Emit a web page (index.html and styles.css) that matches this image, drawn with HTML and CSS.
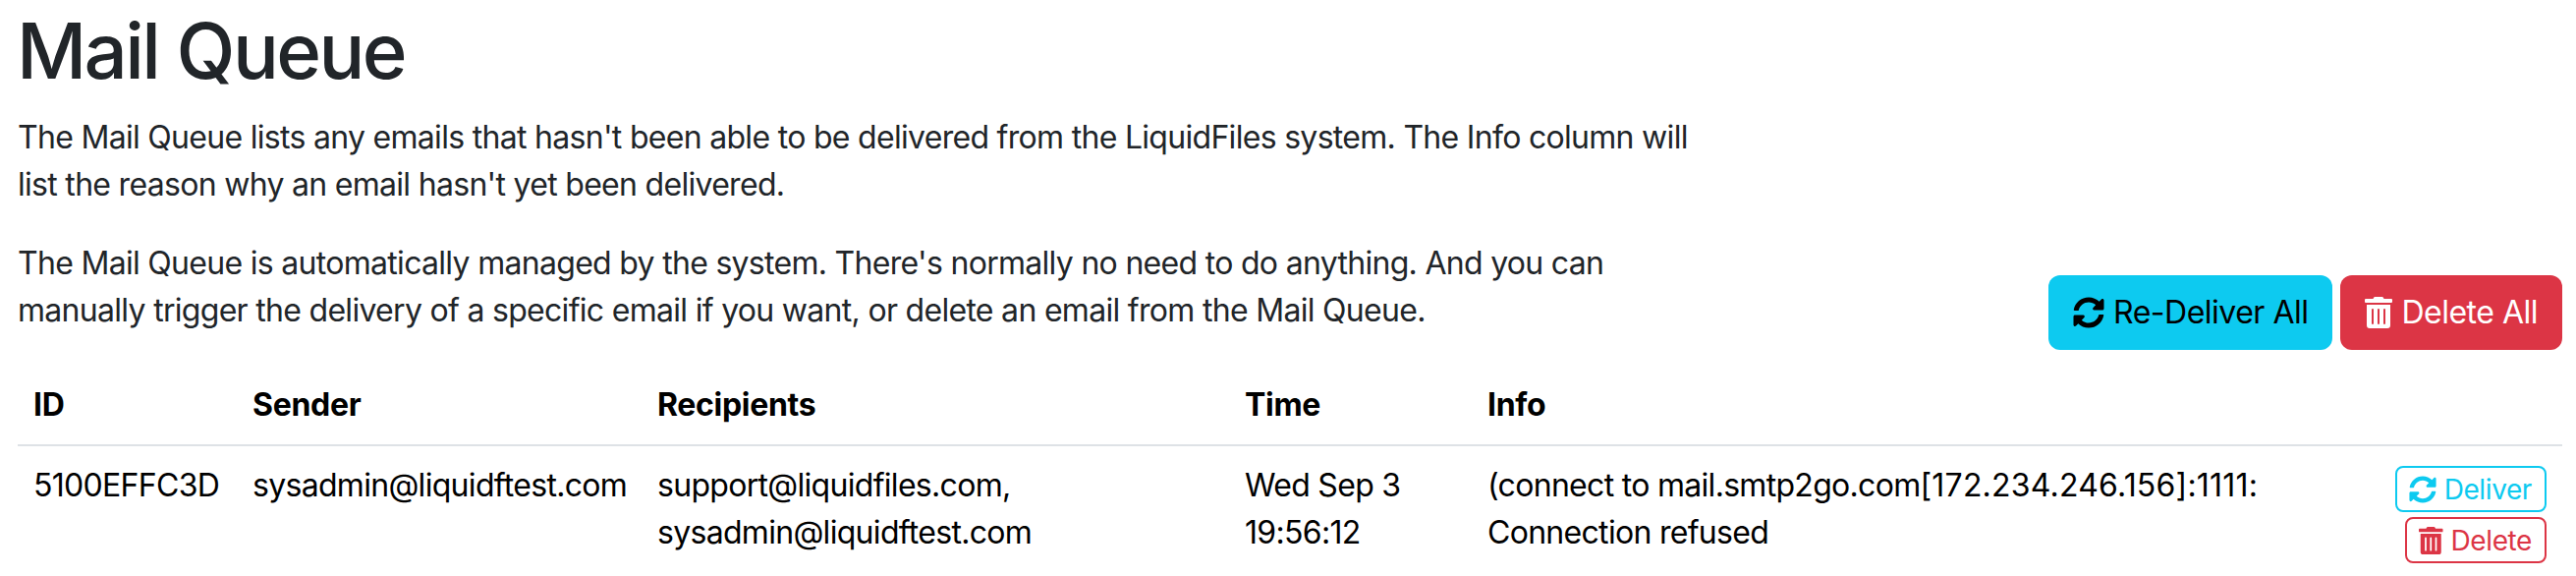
FILE: index.html
```html
<!DOCTYPE html>
<html lang="en">
<head>
<meta charset="utf-8">
<title>Mail Queue</title>
<link rel="stylesheet" href="styles.css">
</head>
<body>
<main class="page">
  <h1 class="title">Mail Queue</h1>
  <div class="intro">
    <div class="intro-text">
      <p>The Mail Queue lists any emails that hasn't been able to be delivered from the LiquidFiles system. The Info column will list the reason why an email hasn't yet been delivered.</p>
      <p>The Mail Queue is automatically managed by the system. There's normally no need to do anything. And you can manually trigger the delivery of a specific email if you want, or delete an email from the Mail Queue.</p>
    </div>
    <div class="intro-actions">
      <button class="btn btn-info"><svg class="icon" viewBox="0 0 512 512"><path d="M370.72 133.28C339.458 104.008 298.888 87.962 255.848 88c-77.458.068-144.328 53.178-162.791 126.85-1.344 5.363-6.122 9.15-11.651 9.15H24.103c-7.498 0-13.194-6.807-11.807-14.176C33.933 94.924 134.813 8 256 8c66.448 0 126.791 26.136 171.315 68.685L463.03 40.97C478.149 25.851 504 36.559 504 57.941V192c0 13.255-10.745 24-24 24H345.941c-21.382 0-32.09-25.851-16.971-40.971l41.75-41.749zM32 296h134.059c21.382 0 32.09 25.851 16.971 40.971l-41.75 41.75c31.262 29.273 71.835 45.319 114.876 45.28 77.418-.07 144.315-53.144 162.787-126.849 1.344-5.363 6.122-9.15 11.651-9.15h57.304c7.498 0 13.194 6.807 11.807 14.176C478.067 417.076 377.187 504 256 504c-66.448 0-126.791-26.136-171.315-68.685L48.97 471.03C33.851 486.149 8 475.441 8 454.059V320c0-13.255 10.745-24 24-24z"/></svg>Re-Deliver All</button>
      <button class="btn btn-danger"><svg class="icon icon-trash" viewBox="0 0 448 512"><path d="M32 464a48 48 0 0 0 48 48h288a48 48 0 0 0 48-48V128H32zm272-256a16 16 0 0 1 32 0v224a16 16 0 0 1-32 0zm-96 0a16 16 0 0 1 32 0v224a16 16 0 0 1-32 0zm-96 0a16 16 0 0 1 32 0v224a16 16 0 0 1-32 0zM432 32H312l-9.400-18.700A24 24 0 0 0 281.100 0H166.800a23.720 23.720 0 0 0-21.400 13.300L136 32H16A16 16 0 0 0 0 48v32a16 16 0 0 0 16 16h416a16 16 0 0 0 16-16V48a16 16 0 0 0-16-16z"/></svg>Delete All</button>
    </div>
  </div>
  <table class="queue">
    <colgroup><col class="c-id"><col class="c-sender"><col class="c-rcpt"><col class="c-time"><col class="c-info"><col class="c-act"></colgroup>
    <thead>
      <tr><th>ID</th><th>Sender</th><th>Recipients</th><th>Time</th><th>Info</th><th></th></tr>
    </thead>
    <tbody>
      <tr>
        <td>5100EFFC3D</td>
        <td>sysadmin@liquidftest.com</td>
        <td>support@liquidfiles.com,<br>sysadmin@liquidftest.com</td>
        <td>Wed Sep 3<br>19:56:12</td>
        <td>(connect to mail.smtp2go.com<span class="nums">[172.234.246.156]:1111:</span><br>Connection refused</td>
        <td>
          <div class="row-actions">
            <button class="btn-sm btn-sm-info"><svg class="icon" viewBox="0 0 512 512"><path d="M370.72 133.28C339.458 104.008 298.888 87.962 255.848 88c-77.458.068-144.328 53.178-162.791 126.85-1.344 5.363-6.122 9.15-11.651 9.15H24.103c-7.498 0-13.194-6.807-11.807-14.176C33.933 94.924 134.813 8 256 8c66.448 0 126.791 26.136 171.315 68.685L463.03 40.97C478.149 25.851 504 36.559 504 57.941V192c0 13.255-10.745 24-24 24H345.941c-21.382 0-32.09-25.851-16.971-40.971l41.75-41.749zM32 296h134.059c21.382 0 32.09 25.851 16.971 40.971l-41.75 41.75c31.262 29.273 71.835 45.319 114.876 45.28 77.418-.07 144.315-53.144 162.787-126.849 1.344-5.363 6.122-9.15 11.651-9.15h57.304c7.498 0 13.194 6.807 11.807 14.176C478.067 417.076 377.187 504 256 504c-66.448 0-126.791-26.136-171.315-68.685L48.97 471.03C33.851 486.149 8 475.441 8 454.059V320c0-13.255 10.745-24 24-24z"/></svg>Deliver</button>
            <button class="btn-sm btn-sm-danger"><svg class="icon icon-trash" viewBox="0 0 448 512"><path d="M32 464a48 48 0 0 0 48 48h288a48 48 0 0 0 48-48V128H32zm272-256a16 16 0 0 1 32 0v224a16 16 0 0 1-32 0zm-96 0a16 16 0 0 1 32 0v224a16 16 0 0 1-32 0zm-96 0a16 16 0 0 1 32 0v224a16 16 0 0 1-32 0zM432 32H312l-9.400-18.700A24 24 0 0 0 281.100 0H166.800a23.720 23.720 0 0 0-21.400 13.300L136 32H16A16 16 0 0 0 0 48v32a16 16 0 0 0 16 16h416a16 16 0 0 0 16-16V48a16 16 0 0 0-16-16z"/></svg>Delete</button>
          </div>
        </td>
      </tr>
    </tbody>
  </table>
</main>
</body>
</html>
```
FILE: styles.css
```css
* { box-sizing: border-box; }
html, body { margin: 0; padding: 0; background: #fff; }
body {
  font-family: Inter, "Liberation Sans", sans-serif;
  font-size: 32px;
  line-height: 48px;
  color: #212529;
  overflow: hidden;
}
.page { padding: 4px 14px 0 18px; }
.title { margin: 0 0 16px -1px; font-size: 78px; line-height: 96px; font-weight: 500; letter-spacing: -2.6px; }
.intro { display: flex; justify-content: space-between; align-items: flex-end; }
.intro-text { width: 1730px; letter-spacing: -0.7px; }
.intro-text p { margin: 0 0 32px; }
.intro-actions { display: flex; gap: 8px; margin-bottom: 16px; }
.btn {
  display: inline-flex; align-items: center; gap: 9px;
  height: 76px; padding: 0 25px; border: 0; border-radius: 12px;
  font: inherit; letter-spacing: -0.5px; white-space: nowrap;
}
.btn-info { background: #0dcaf0; color: #000; }
.btn-danger { background: #dc3545; color: #fff; }
.icon { width: 32px; height: 32px; fill: currentColor; flex: none; }
.icon-trash { width: 28px; }
.queue { width: 100%; border-collapse: collapse; table-layout: fixed; color: #000; letter-spacing: -0.7px; }
.c-id { width: 223px; }
.c-sender { width: 412px; }
.c-rcpt { width: 598px; }
.c-time { width: 247px; }
.c-info { width: 841px; }
.queue th { text-align: left; font-weight: 700; padding: 16px; border-bottom: 2px solid #dee2e6; letter-spacing: -0.3px; }
.queue td { padding: 16px; vertical-align: top; white-space: nowrap; }
.nums { letter-spacing: 0.2px; }
.row-actions { display: flex; flex-direction: column; align-items: flex-end; gap: 5px; padding-top: 4px; }
.btn-sm {
  display: inline-flex; align-items: center; gap: 8px;
  height: 47px; padding: 0 13px 0 12px; background: #fff; border: 2px solid; border-radius: 8px;
  font: inherit; font-size: 28px; line-height: 1; letter-spacing: -0.4px;
}
.btn-sm .icon { width: 28px; height: 28px; }
.btn-sm .icon-trash { width: 24.5px; }
.btn-sm-info { color: #0dcaf0; border-color: #0dcaf0; }
.btn-sm-danger { color: #dc3545; border-color: #dc3545; }
```
